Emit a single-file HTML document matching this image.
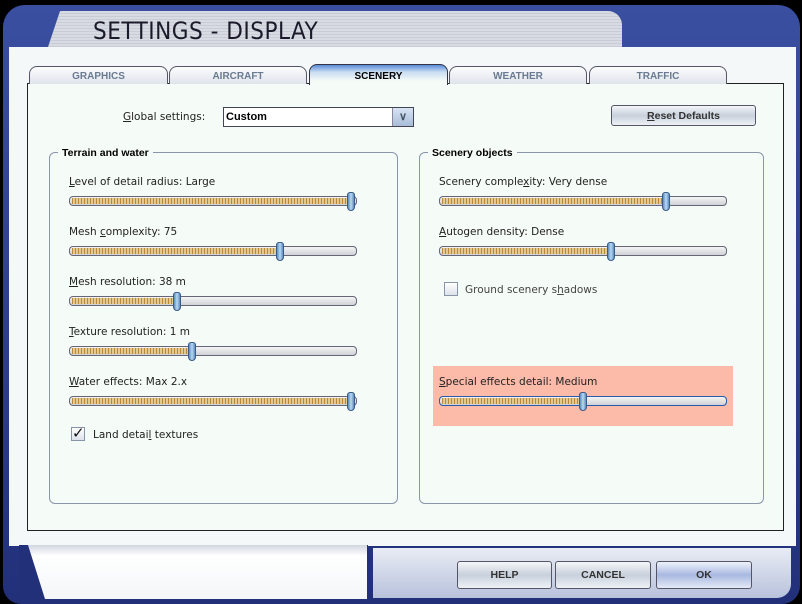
<!DOCTYPE html>
<html><head><style>
*{box-sizing:border-box;margin:0;padding:0}
body{width:802px;height:604px;background:#000;position:relative;overflow:hidden;font-family:"DejaVu Sans","Liberation Sans",sans-serif;font-size:10px;color:#222}
.a{position:absolute}
.frame{left:3px;top:5px;width:797px;height:599px;background:linear-gradient(#3a4fa0,#22307a);border-radius:22px 22px 18px 18px}
.title{left:48px;top:11px;width:574px;height:36px;background:repeating-linear-gradient(#d8dbe2 0 2px,#c8ccd6 2px 3px);border-radius:14px 14px 0 0;clip-path:polygon(12px 0,100% 0,100% 100%,0 100%)}
.ttxt{left:93px;top:17px;font-family:"DejaVu Sans Condensed","Liberation Sans Narrow","Liberation Sans",sans-serif;font-size:24px;color:#1a1a2a;letter-spacing:0.5px}
.white{left:9px;top:47px;width:787px;height:499px;background:#f4f8f8}
.panel{left:27px;top:83px;width:757px;height:448px;border:1px solid #222;background:#f5fbf7}
.tab{top:66px;height:18px;border:1px solid #556;border-bottom:none;border-radius:8px 8px 0 0;background:linear-gradient(#fbfcfd,#dfe4ec);font-family:"Liberation Sans",sans-serif;font-weight:bold;font-size:10px;color:#6a7a90;text-align:center;line-height:19px}
.tab.on{background:linear-gradient(#5a8ad8,#c8dcf2 35%,#f5fbf7 80%);color:#000;top:64px;height:21px;line-height:23px;border-color:#334}
.grp{border:1px solid #8a96aa;border-radius:6px}
.gt{background:#f5fbf7;font-family:"Liberation Sans",sans-serif;font-weight:bold;font-size:10.5px;color:#000;padding:0 4px}
.sl{height:10px;border:1px solid #667;border-radius:4px;background:linear-gradient(#f4f4f4,#cfd2d6)}
.fill{position:absolute;left:2px;top:1px;height:6px;background:repeating-linear-gradient(90deg,#b8893a 0 1px,#e3c890 1px 3px)}
.th{position:absolute;top:-5px;width:8px;height:19px;background:linear-gradient(90deg,#5c8dc0,#b8d8f2,#5c8dc0);border:1px solid #3a5a88;border-radius:3px 3px 4px 4px}
.lbl{font-size:10.5px;color:#222}
.btn{border:1px solid #556;border-radius:3px;background:linear-gradient(#f4f6f8,#c8d0dc 50%,#eef2f6);font-family:"Liberation Sans",sans-serif;font-weight:bold;font-size:10.5px;color:#333;text-align:center}
</style></head><body>
<div class="a frame"></div>
<div class="a title"></div>
<div class="a ttxt">SETTINGS - DISPLAY</div>
<div class="a white"></div>
<div class="a panel"></div>
<div class="a tab" style="left:29px;width:139px">GRAPHICS</div>
<div class="a tab" style="left:169px;width:138px">AIRCRAFT</div>
<div class="a tab on" style="left:309px;width:139px">SCENERY</div>
<div class="a tab" style="left:449px;width:138px">WEATHER</div>
<div class="a tab" style="left:589px;width:138px">TRAFFIC</div>

<div class="a lbl" style="left:123px;top:111px"><u>G</u>lobal settings:</div>
<div class="a" style="left:223px;top:107px;width:191px;height:20px;border:1px solid #445;background:#fff;font-family:'Liberation Sans',sans-serif;font-weight:bold;font-size:11px;line-height:19px;padding-left:2px;color:#000">Custom
<div class="a" style="right:0;top:0;width:21px;height:18px;background:linear-gradient(#d8e4f4,#a8bcd8);border-left:1px solid #889;text-align:center;color:#456;font-size:11px">∨</div></div>
<div class="a btn" style="left:611px;top:105px;width:145px;height:21px;line-height:20px"><u>R</u>eset Defaults</div>

<div class="a grp" style="left:49px;top:152px;width:349px;height:352px"></div>
<div class="a gt" style="left:58px;top:147px">Terrain and water</div>
<div class="a grp" style="left:419px;top:152px;width:345px;height:352px"></div>
<div class="a gt" style="left:428px;top:147px">Scenery objects</div>

<div class="a" style="left:433px;top:366px;width:300px;height:60px;background:#fcbaa9"></div>

<div class="a lbl" style="left:69px;top:176px"><u>L</u>evel of detail radius: Large</div>
<div class="a sl" style="left:69px;top:196px;width:288px"><div class="fill" style="width:280px"></div><div class="th" style="left:277px"></div></div>
<div class="a lbl" style="left:69px;top:226px">Mesh <u>c</u>omplexity: 75</div>
<div class="a sl" style="left:69px;top:246px;width:288px"><div class="fill" style="width:208px"></div><div class="th" style="left:206px"></div></div>
<div class="a lbl" style="left:69px;top:276px"><u>M</u>esh resolution: 38 m</div>
<div class="a sl" style="left:69px;top:296px;width:288px"><div class="fill" style="width:105px"></div><div class="th" style="left:103px"></div></div>
<div class="a lbl" style="left:69px;top:326px"><u>T</u>exture resolution: 1 m</div>
<div class="a sl" style="left:69px;top:346px;width:288px"><div class="fill" style="width:120px"></div><div class="th" style="left:118px"></div></div>
<div class="a lbl" style="left:69px;top:376px"><u>W</u>ater effects: Max 2.x</div>
<div class="a sl" style="left:69px;top:396px;width:288px"><div class="fill" style="width:280px"></div><div class="th" style="left:277px"></div></div>
<div class="a" style="left:71px;top:427px;width:14px;height:14px;border:1px solid #8894a8;background:linear-gradient(#fff,#dde2ea);font-size:15px;line-height:11px;color:#111;text-align:center">✓</div>
<div class="a lbl" style="left:93px;top:429px">Land detai<u>l</u> textures</div>

<div class="a lbl" style="left:439px;top:176px">Scenery comple<u>x</u>ity: Very dense</div>
<div class="a sl" style="left:439px;top:196px;width:288px"><div class="fill" style="width:224px"></div><div class="th" style="left:222px"></div></div>
<div class="a lbl" style="left:439px;top:226px"><u>A</u>utogen density: Dense</div>
<div class="a sl" style="left:439px;top:246px;width:288px"><div class="fill" style="width:169px"></div><div class="th" style="left:167px"></div></div>
<div class="a" style="left:444px;top:282px;width:14px;height:14px;border:1px solid #8894a8;background:linear-gradient(#fff,#dde2ea)"></div>
<div class="a lbl" style="left:465px;top:284px;color:#444">Ground scenery s<u>h</u>adows</div>
<div class="a lbl" style="left:439px;top:376px"><u>S</u>pecial effects detail: Medium</div>
<div class="a sl" style="left:439px;top:396px;width:288px;border-color:#2a5aa8"><div class="fill" style="width:141px"></div><div class="th" style="left:139px"></div></div>

<div class="a" style="left:373px;top:548px;width:418px;height:50px;background:linear-gradient(#e8ecf4,#b8c2dc);border-radius:0 0 14px 0"></div>
<div class="a" style="left:19px;top:545px;width:220px;height:54px;background:#22307a"></div>
<div class="a" style="left:28px;top:545px;width:340px;height:54px;background:linear-gradient(#d0d6e0,#fff 20%,#f4f6f8);clip-path:polygon(0 0,100% 0,100% 100%,5% 100%);border-right:1px solid #334"></div>
<div class="a btn" style="left:457px;top:561px;width:95px;height:28px;line-height:27px">HELP</div>
<div class="a btn" style="left:555px;top:561px;width:96px;height:28px;line-height:27px">CANCEL</div>
<div class="a btn" style="left:656px;top:561px;width:96px;height:28px;line-height:27px;background:linear-gradient(#eef2fa,#a8b8e0 50%,#e4eaf6)">OK</div>
</body></html>
